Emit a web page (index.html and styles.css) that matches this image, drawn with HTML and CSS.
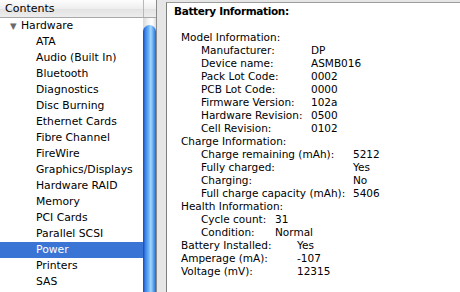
FILE: index.html
```html
<!DOCTYPE html>
<html lang="en">
<head>
    <meta charset="UTF-8">
    <title>System Profiler - Power</title>
    <link rel="stylesheet" href="styles.css">
</head>
<body>
    <div class="window">
        <div class="sidebar">
            <div class="header">
                <div class="header-title">Contents</div>
                <div class="header-corner"></div>
            </div>
            <div class="sidebar-body">
                <ul class="tree">
                    <li class="group"><span class="disclosure">&#9660;</span>Hardware</li>
                    <li>ATA</li>
                    <li>Audio (Built In)</li>
                    <li>Bluetooth</li>
                    <li>Diagnostics</li>
                    <li>Disc Burning</li>
                    <li>Ethernet Cards</li>
                    <li>Fibre Channel</li>
                    <li>FireWire</li>
                    <li>Graphics/Displays</li>
                    <li>Hardware RAID</li>
                    <li>Memory</li>
                    <li>PCI Cards</li>
                    <li>Parallel SCSI</li>
                    <li class="selected">Power</li>
                    <li>Printers</li>
                    <li>SAS</li>
                </ul>
                <div class="scrollbar">
                    <div class="thumb"></div>
                </div>
            </div>
        </div>

        <div class="splitter"></div>

        <div class="detail">
            <div class="title">Battery Information:</div>
            <div class="blank"></div>

            <div class="section">Model Information:</div>
            <div class="rows model">
                <div class="row"><span class="label">Manufacturer:</span><span>DP</span></div>
                <div class="row"><span class="label">Device name:</span><span>ASMB016</span></div>
                <div class="row"><span class="label">Pack Lot Code:</span><span>0002</span></div>
                <div class="row"><span class="label">PCB Lot Code:</span><span>0000</span></div>
                <div class="row"><span class="label">Firmware Version:</span><span>102a</span></div>
                <div class="row"><span class="label">Hardware Revision:</span><span>0500</span></div>
                <div class="row"><span class="label">Cell Revision:</span><span>0102</span></div>
            </div>

            <div class="section">Charge Information:</div>
            <div class="rows charge">
                <div class="row"><span class="label">Charge remaining (mAh):</span><span>5212</span></div>
                <div class="row"><span class="label">Fully charged:</span><span>Yes</span></div>
                <div class="row"><span class="label">Charging:</span><span>No</span></div>
                <div class="row"><span class="label">Full charge capacity (mAh):</span><span>5406</span></div>
            </div>

            <div class="section">Health Information:</div>
            <div class="rows health">
                <div class="row"><span class="label">Cycle count:</span><span>31</span></div>
                <div class="row"><span class="label">Condition:</span><span>Normal</span></div>
            </div>

            <div class="rows top">
                <div class="row"><span class="label">Battery Installed:</span><span>Yes</span></div>
                <div class="row"><span class="label">Amperage (mA):</span><span>-107</span></div>
                <div class="row"><span class="label">Voltage (mV):</span><span>12315</span></div>
            </div>
        </div>
    </div>
</body>
</html>
```

FILE: styles.css
```css
html, body {
    margin: 0;
    padding: 0;
}
body {
    font-family: "DejaVu Sans", "Liberation Sans", sans-serif;
    font-size: 10.5px;
    color: #000;
    background: #e6e6e6;
}
.window {
    display: flex;
    width: 460px;
    height: 292px;
    overflow: hidden;
}

/* left pane */
.sidebar {
    width: 156px;
    display: flex;
    flex-direction: column;
    background: #fff;
    border-right: 1px solid #8a8a8a;
}
.header {
    display: flex;
    height: 17px;
    border-bottom: 1px solid #a8a8a8;
    background: linear-gradient(#fdfdfd, #eeeeee 50%, #e2e2e2 51%, #ededed);
}
.header-title {
    width: 138px;
    padding-left: 5px;
    line-height: 17px;
    font-size: 11px;
    border-right: 1px solid #b8b8b8;
}
.header-corner {
    flex: 1;
}
.sidebar-body {
    flex: 1;
    display: flex;
}
.tree {
    list-style: none;
    margin: 0;
    padding: 0;
    width: 143px;
    font-size: 10.8px;
}
.tree li {
    height: 16px;
    line-height: 16px;
    padding-left: 36px;
    white-space: nowrap;
}
.tree li.group {
    padding-left: 10px;
}
.disclosure {
    display: inline-block;
    width: 11px;
    font-size: 8.5px;
    color: #6a6a6a;
    vertical-align: top;
}
.tree li.selected {
    background: #3a74d4;
    color: #fff;
}
.scrollbar {
    width: 13px;
    padding-top: 7px;
    background: linear-gradient(90deg, #d8d8d8, #f4f4f4 40%, #ffffff 70%, #e0e0e0);
}
.thumb {
    height: 280px;
    border-radius: 7px 7px 0 0;
    background: linear-gradient(90deg, #1546b8 0%, #3c82e8 18%, #6fb6f6 45%, #a4d8fc 60%, #5aa4f0 80%, #2a62d0 100%);
}

/* splitter */
.splitter {
    width: 9px;
    background: #e6e6e6;
}

/* right pane */
.detail {
    flex: 1;
    margin-top: 2px;
    padding: 2px 0 0 7px;
    background: #fff;
    border-top: 1px solid #9c9c9c;
    border-left: 1px solid #7e7e7e;
    line-height: 13px;
    white-space: nowrap;
}
.title {
    font-weight: bold;
    letter-spacing: -0.35px;
}
.blank {
    height: 13px;
}
.section {
    padding-left: 7px;
}
.rows {
    padding-left: 27px;
}
.rows.top {
    padding-left: 7px;
}
.row {
    display: flex;
}
.model .label { width: 110px; }
.charge .label { width: 152px; }
.health .label { width: 74px; }
.top .label { width: 116px; }
```
